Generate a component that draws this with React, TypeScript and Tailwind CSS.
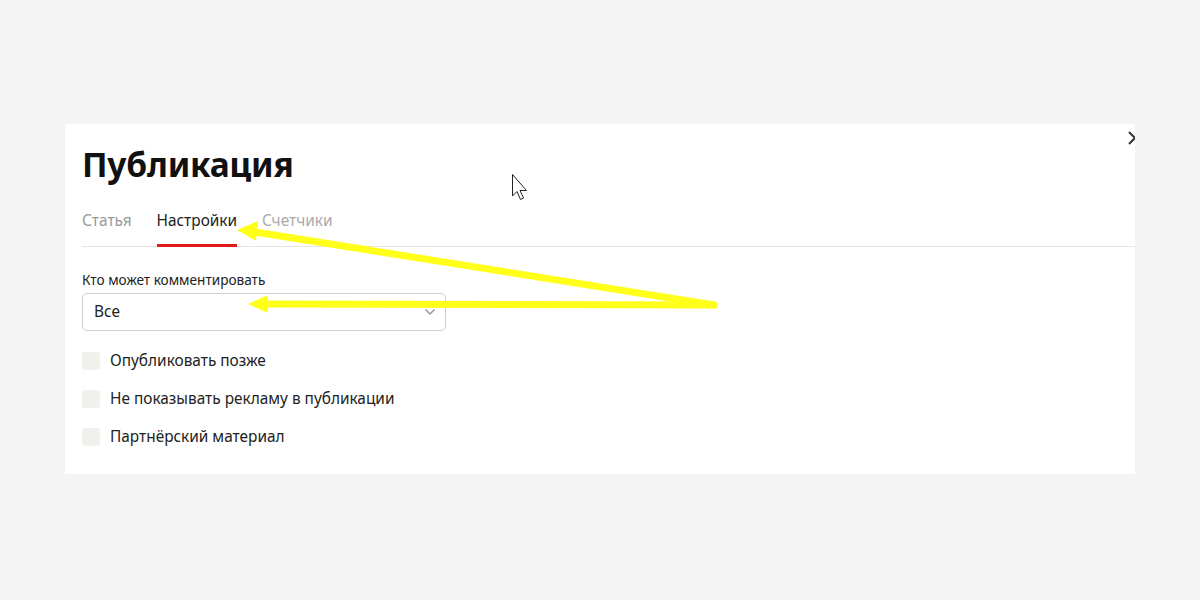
import React from "react";

export default function App() {
  const font = { fontFamily: '"Noto Sans", "Liberation Sans", Arial, sans-serif' };
  return (
    <div className="w-[1200px] h-[600px] bg-[#f4f4f4] relative overflow-hidden" style={font}>
      <div className="absolute left-[65px] top-[124px] w-[1070px] h-[350px] bg-white overflow-hidden">
        <div className="relative h-full pt-[20px]">
          <svg className="absolute right-[-8px] top-[6px]" width="16" height="16" viewBox="0 0 16 16">
            <path d="M2 2 L14 14 M14 2 L2 14" stroke="#333" strokeWidth="2" fill="none" />
          </svg>
          <h1 className="pl-[17px] text-[33.5px] leading-[40px] font-bold text-[#111] tracking-[-0.2px]">Публикация</h1>
          <div className="mt-[27px] ml-[17px] flex gap-[25px] text-[15.4px] leading-[20px] border-b border-[#e5e5e5]">
            <div className="pb-[15px] text-[#999]">Статья</div>
            <div className="pb-[13px] text-[#222] border-b-[3px] border-[#e21a1a] mb-[-1px]">Настройки</div>
            <div className="pb-[15px] text-[#aaa]">Счетчики</div>
          </div>
          <div className="pl-[17px] pt-[24px]">
            <div className="text-[13.6px] leading-[18px] text-[#222]">Кто может комментировать</div>
            <div className="mt-[4px] w-[364px] h-[38px] rounded-[5px] border border-[#cfcfcf] flex items-center justify-between pl-[11px] pr-[9px]">
              <span className="text-[15.4px] text-[#222]">Все</span>
              <svg width="12" height="8" viewBox="0 0 12 8">
                <path d="M1.5 1.5 L6 6 L10.5 1.5" stroke="#999" strokeWidth="1.5" fill="none" />
              </svg>
            </div>
            <div className="mt-[21px] flex flex-col gap-[20px]">
              {["Опубликовать позже", "Не показывать рекламу в публикации", "Партнёрский материал"].map((t) => (
                <div key={t} className="flex items-center gap-[10px] h-[18px]">
                  <div className="w-[18px] h-[18px] rounded-[3px] bg-[#f1f0ed]" />
                  <span className="text-[15.4px] text-[#222]">{t}</span>
                </div>
              ))}
            </div>
          </div>
        </div>
      </div>
      <svg className="absolute left-0 top-0" width="1200" height="600" viewBox="0 0 1200 600">
        <g stroke="#ffff1a" strokeWidth="7" strokeLinecap="round" fill="none">
          <path d="M714 305 L255 232" />
          <path d="M714 305 L265 304" />
        </g>
        <g fill="#ffff1a">
          <path d="M237 230 L258 221 L256 241 Z" />
          <path d="M248 304 L268 295 L268 313 Z" />
        </g>
        <path d="M512.5 174.5 L512.5 196 L517 191.5 L520.5 199.5 L523.5 198 L520 190.5 L526.5 190.5 Z" fill="white" stroke="#222" strokeWidth="1" />
      </svg>
    </div>
  );
}
